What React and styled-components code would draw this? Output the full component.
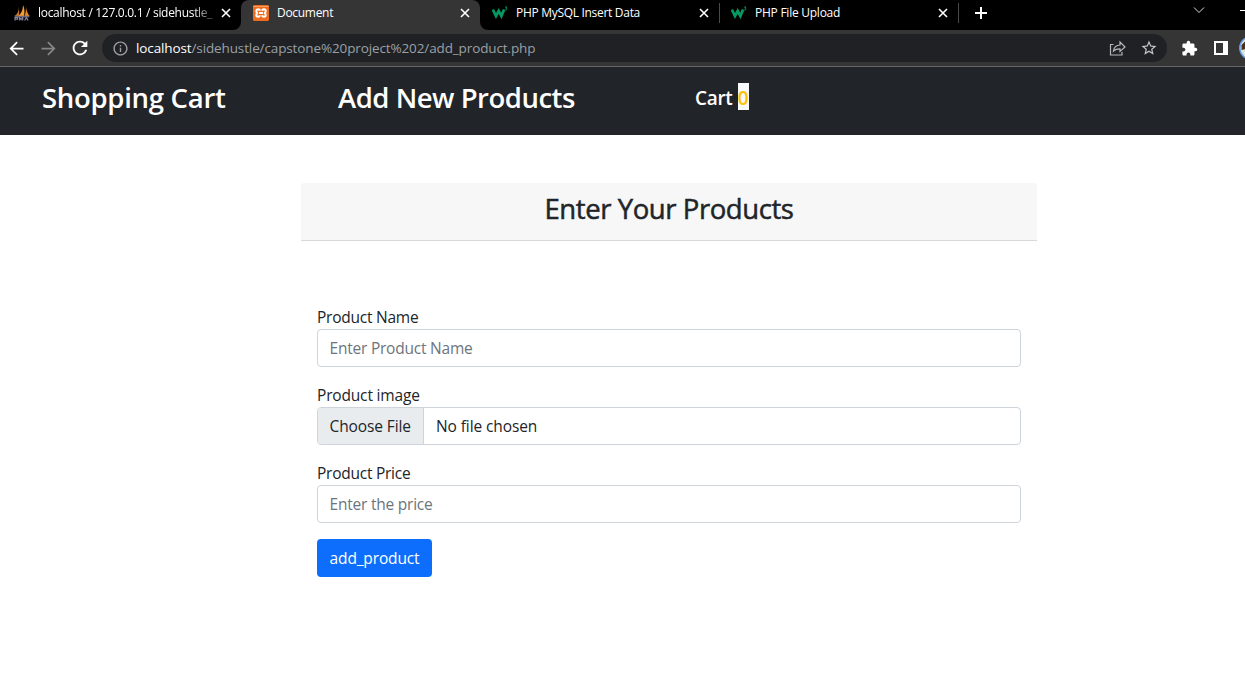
import React from "react";
import styled, { createGlobalStyle } from "styled-components";
import { MdArrowBack, MdArrowForward, MdRefresh, MdInfoOutline, MdStarBorder, MdExtension } from "react-icons/md";

const Global = createGlobalStyle`
  * { box-sizing: border-box; }
  body {
    margin: 0;
    background: #fff;
    color: #212529;
    font: 400 16px/24px "Segoe UI", "Open Sans", "Noto Sans", sans-serif;
    overflow: hidden;
  }
  h2, h3, h5 { margin: 0; }
`;

const Browser = styled.header`
  height: 67px;
  background: #353535;
  border-bottom: 1px solid #636464;
`;

const TabStrip = styled.div`
  display: flex;
  height: 30px;
  padding-left: 2px;
  background: #000;
  color: #fff;
`;

const Tab = styled.div`
  display: flex;
  align-items: center;
  width: 239px;
  height: 30px;
  padding: 0 9px 4px 12px;
  flex: none;
  background: ${(p) => (p.$active ? "#353535" : "#000")};
  border-radius: ${(p) => (p.$active ? "8px 8px 0 0" : p.$side === "left" ? "0 0 8px 0" : p.$side === "right" ? "0 0 0 8px" : "0")};
`;

const TabBacking = styled.div`
  flex: none;
  background: ${(p) => (p.$joined ? "linear-gradient(#000 50%, #353535 50%)" : "#000")};
`;

const TabTitle = styled.span`
  width: 175px;
  margin-left: 8px;
  white-space: nowrap;
  font-size: 12px;
  line-height: 18px;
  letter-spacing: ${(p) => p.$track || 0}px;
  ${(p) => p.$fade && "mask-image: linear-gradient(to right, #000 155px, rgba(0,0,0,.3) 172px);"}
`;

const CloseIcon = styled.svg`
  width: 10px;
  height: 10px;
  margin-left: 8px;
  flex: none;
`;

const Divider = styled.i`
  width: 1px;
  height: 20px;
  margin: 3px -1px 0 0;
  background: #4a4a4a;
  flex: none;
  z-index: 1;
`;

const NewTab = styled.svg`
  width: 12px;
  height: 12px;
  margin: 7px 0 0 17px;
  flex: none;
`;

const WindowControls = styled.div`
  display: flex;
  gap: 35px;
  margin-left: auto;
`;

const Toolbar = styled.div`
  display: flex;
  align-items: center;
  height: 36px;
  padding-left: 6px;
  color: #fff;
  overflow: hidden;
`;

const NavIcon = styled.span`
  display: flex;
  align-items: center;
  justify-content: center;
  width: 32px;
  flex: none;
  margin-left: ${(p) => p.$before || 0}px;
  color: ${(p) => p.$color || "#fff"};
  transform: translateX(${(p) => p.$nudge || 0}px);
`;

const Address = styled.div`
  display: flex;
  align-items: center;
  width: 1065px;
  height: 28px;
  padding: 0 8px 0 10px;
  border-radius: 14px;
  background: #202124;
  color: #9aa0a6;
  flex: none;
`;

const Url = styled.span`
  flex: 1;
  margin-left: 7px;
  font-size: 13.5px;
  line-height: 20px;
  letter-spacing: ${(p) => p.$track}px;
  b { font-weight: 400; color: #fff; }
`;

const Avatar = styled.svg`
  width: 24px;
  height: 24px;
  margin-left: 2px;
  flex: none;
`;

const Navbar = styled.nav`
  display: grid;
  grid-template-columns: 296px 357px auto;
  height: 68px;
  padding: 14px 0 0 42px;
  background: #212529;
  color: #fff;
  white-space: nowrap;
`;

const Title = styled.h3`
  font-size: 27.5px;
  font-weight: 600;
  line-height: 34px;
  letter-spacing: ${(p) => p.$track || 0}px;
`;

const Cart = styled.h5`
  display: flex;
  gap: 5px;
  font-size: 19px;
  font-weight: 600;
  line-height: 34px;
  letter-spacing: -0.3px;
`;

const Count = styled.span`
  width: 11px;
  height: 27px;
  margin-top: 2px;
  line-height: 30px;
  text-align: center;
  background: #f8f9fa;
  color: #ffc107;
`;

const Card = styled.main`
  width: 736px;
  margin: 48px 0 0 301px;
`;

const CardHeader = styled.div`
  height: 58px;
  padding-top: 9px;
  text-align: center;
  background: #f7f7f7;
  border-bottom: 1px solid #d8d8d8;
  border-radius: 3px 3px 0 0;
`;

const HeaderTitle = styled(Title)`
  font-weight: 400;
  -webkit-text-stroke: 0.5px #212529;
`;

const Form = styled.form`
  padding: 64px 16px 0;
`;

const Field = styled.div`
  margin-bottom: 16px;
`;

const Label = styled.label`
  display: block;
  height: 24px;
  font-size: 15.5px;
  line-height: 25px;
  letter-spacing: ${(p) => p.$track}px;
`;

const Input = styled.input`
  display: block;
  width: 100%;
  height: 38px;
  padding: 0 11.5px;
  border: 1px solid #ced4da;
  border-radius: 4px;
  outline: 0;
  background: #fff;
  font: inherit;
  font-size: 15.5px;
  letter-spacing: ${(p) => p.$track}px;
  &::placeholder { color: #6c757d; opacity: 1; }
`;

const FilePicker = styled.div`
  display: flex;
  height: 38px;
  border: 1px solid #ced4da;
  border-radius: 4px;
  overflow: hidden;
  font-size: 15.5px;
  line-height: 37px;
`;

const Choose = styled.span`
  width: 106px;
  padding-left: 11.5px;
  background: #e9ecef;
  border-right: 1px solid #ced4da;
  letter-spacing: ${(p) => p.$track}px;
`;

const FileName = styled.span`
  padding-left: 12px;
  letter-spacing: ${(p) => p.$track}px;
`;

const Submit = styled.button`
  width: 115px;
  height: 38px;
  padding: 0;
  border: 0;
  border-radius: 4px;
  background: #0d6efd;
  color: #fff;
  font: inherit;
  font-size: 15.5px;
  letter-spacing: ${(p) => p.$track}px;
`;

const Close = () => (
  <CloseIcon viewBox="0 0 10 10" stroke="#fff" strokeWidth="1.6">
    <path d="M1 1l8 8M9 1L1 9" />
  </CloseIcon>
);

const SailIcon = () => (
  <svg width="16" height="16" viewBox="0 0 16 16">
    <path d="M5 1.5C5 6 3.6 9 .3 11.3h4.900z" fill="#c47a2c" />
    <path d="M9 0C9 5 7.3 8.5 4 11.3h6C11 7 10.500 3 9 0z" fill="#f89c2e" />
    <path d="M11.800 1c.4 3.500 0 7.300-1.400 10.300h5.400C14 9 12.500 6 11.800 1z" fill="#e58a25" />
    <path d="M.3 10.800h15.400l-1 1.600H1.300z" fill="#6b6277" />
    <path d="M1 15.500v-3h2.500v1.700H1M5.500 15.500v-3l1.600 2 1.600-2v3M10.700 15.500l1.700-3 1.700 3" fill="none" stroke="#85839f" strokeWidth="1.200" />
  </svg>
);

const XamppIcon = () => (
  <svg width="16" height="16" viewBox="0 0 16 16">
    <rect width="16" height="16" rx="1.500" fill="#ed6c20" />
    <path d="M0 1.500h16" stroke="#f9a66e" strokeWidth=".8" />
    <path d="M6 8h4M6.800 5.800C6.800 3.900 3.300 3.700 3.300 6c0 1 .4 1.600 1 2-.6.400-1 1-1 2 0 2.300 3.500 2.100 3.500.2M9.200 5.800c0-1.900 3.500-2.100 3.500.2 0 1-.4 1.600-1 2 .6.400 1 1 1 2 0 2.300-3.500 2.100-3.500.2" fill="none" stroke="#fff" strokeWidth="2" strokeLinejoin="round" />
  </svg>
);

const SchoolIcon = () => (
  <svg width="16" height="16" viewBox="0 0 16 16" fill="none" stroke="#059862">
    <path d="M.8 4.500L4 11l2.700-5L9.400 11l2.700-6.500" strokeWidth="2.800" />
    <path d="M13 2h2l-1 1.300c1.500 0 1.500 2-.8 1.700" strokeWidth=".9" />
  </svg>
);

export default function App() {
  return (
    <>
      <Global />
      <Browser>
        <TabStrip>
          <TabBacking $joined><Tab $side="left"><SailIcon /><TabTitle $fade $track={-0.3}>localhost / 127.0.0.1 / sidehustle_</TabTitle><Close /></Tab></TabBacking>
          <TabBacking><Tab $active><XamppIcon /><TabTitle $track={-0.3}>Document</TabTitle><Close /></Tab></TabBacking>
          <TabBacking $joined><Tab $side="right"><SchoolIcon /><TabTitle $track={-0.3}>PHP MySQL Insert Data</TabTitle><Close /></Tab></TabBacking>
          <Divider />
          <Tab><SchoolIcon /><TabTitle $track={-0.25}>PHP File Upload</TabTitle><Close /></Tab>
          <Divider />
          <NewTab viewBox="0 0 12 12" stroke="#fff" strokeWidth="2"><path d="M6 0v12M0 6h12" /></NewTab>
          <WindowControls>
            <svg width="12" height="20" viewBox="0 0 12 20" fill="none" stroke="#ddd"><path d="M1 7.500l5 5 5-5" /></svg>
            <svg width="5" height="20" viewBox="0 0 5 20" stroke="#fff"><path d="M0 10.500h5" /></svg>
          </WindowControls>
        </TabStrip>
        <Toolbar>
          <NavIcon $nudge={-6}><MdArrowBack size={21} /></NavIcon>
          <NavIcon $nudge={-6} $color="#868686"><MdArrowForward size={21} /></NavIcon>
          <NavIcon $nudge={-6}><MdRefresh size={22} /></NavIcon>
          <Address>
            <MdInfoOutline size={17} />
            <Url $track={-0.12}><b>localhost</b>/sidehustle/capstone%20project%202/add_product.php</Url>
            <svg width="18" height="18" viewBox="0 0 18 18" fill="none" stroke="#b4b7ba" strokeWidth="1.200">
              <path d="M4.500 5.500H1.500v10.500h11.500V13" />
              <path d="M4.500 12C5 8 7.500 6.200 11 6V3l5 5-5 4.500V9.800c-2.700 0-4.800.5-6.500 2.200z" />
            </svg>
            <NavIcon $nudge={6}><MdStarBorder size={18} color="#c5c7c9" /></NavIcon>
          </Address>
          <NavIcon $before={6}><MdExtension size={17} /></NavIcon>
          <NavIcon>
            <svg width="14" height="14" viewBox="0 0 14 14"><path fillRule="evenodd" fill="#fff" d="M0 0h14v14H0zM2 2v10h7V2z" /></svg>
          </NavIcon>
          <Avatar viewBox="0 0 24 24">
            <circle cx="12" cy="12" r="11.200" fill="#d9e7dc" stroke="#6f9bdc" strokeWidth="1.500" />
            <path d="M2.500 14V9l5-5v9z" fill="#4b3022" />
          </Avatar>
        </Toolbar>
      </Browser>
      <Navbar>
        <Title $track={-0.28}>Shopping Cart</Title>
        <Title $track={-0.48}>Add New Products</Title>
        <Cart>Cart <Count>0</Count></Cart>
      </Navbar>
      <Card>
        <CardHeader><HeaderTitle $track={-0.42}>Enter Your Products</HeaderTitle></CardHeader>
        <Form onSubmit={(e) => e.preventDefault()}>
          <Field><Label $track={-0.24}>Product Name</Label><Input $track={-0.22} placeholder="Enter Product Name" /></Field>
          <Field><Label $track={-0.17}>Product image</Label><FilePicker><Choose $track={-0.1}>Choose File</Choose><FileName $track={-0.1}>No file chosen</FileName></FilePicker></Field>
          <Field><Label $track={-0.25}>Product Price</Label><Input $track={-0.22} placeholder="Enter the price" /></Field>
          <Submit $track={-0.15}>add_product</Submit>
        </Form>
      </Card>
    </>
  );
}
